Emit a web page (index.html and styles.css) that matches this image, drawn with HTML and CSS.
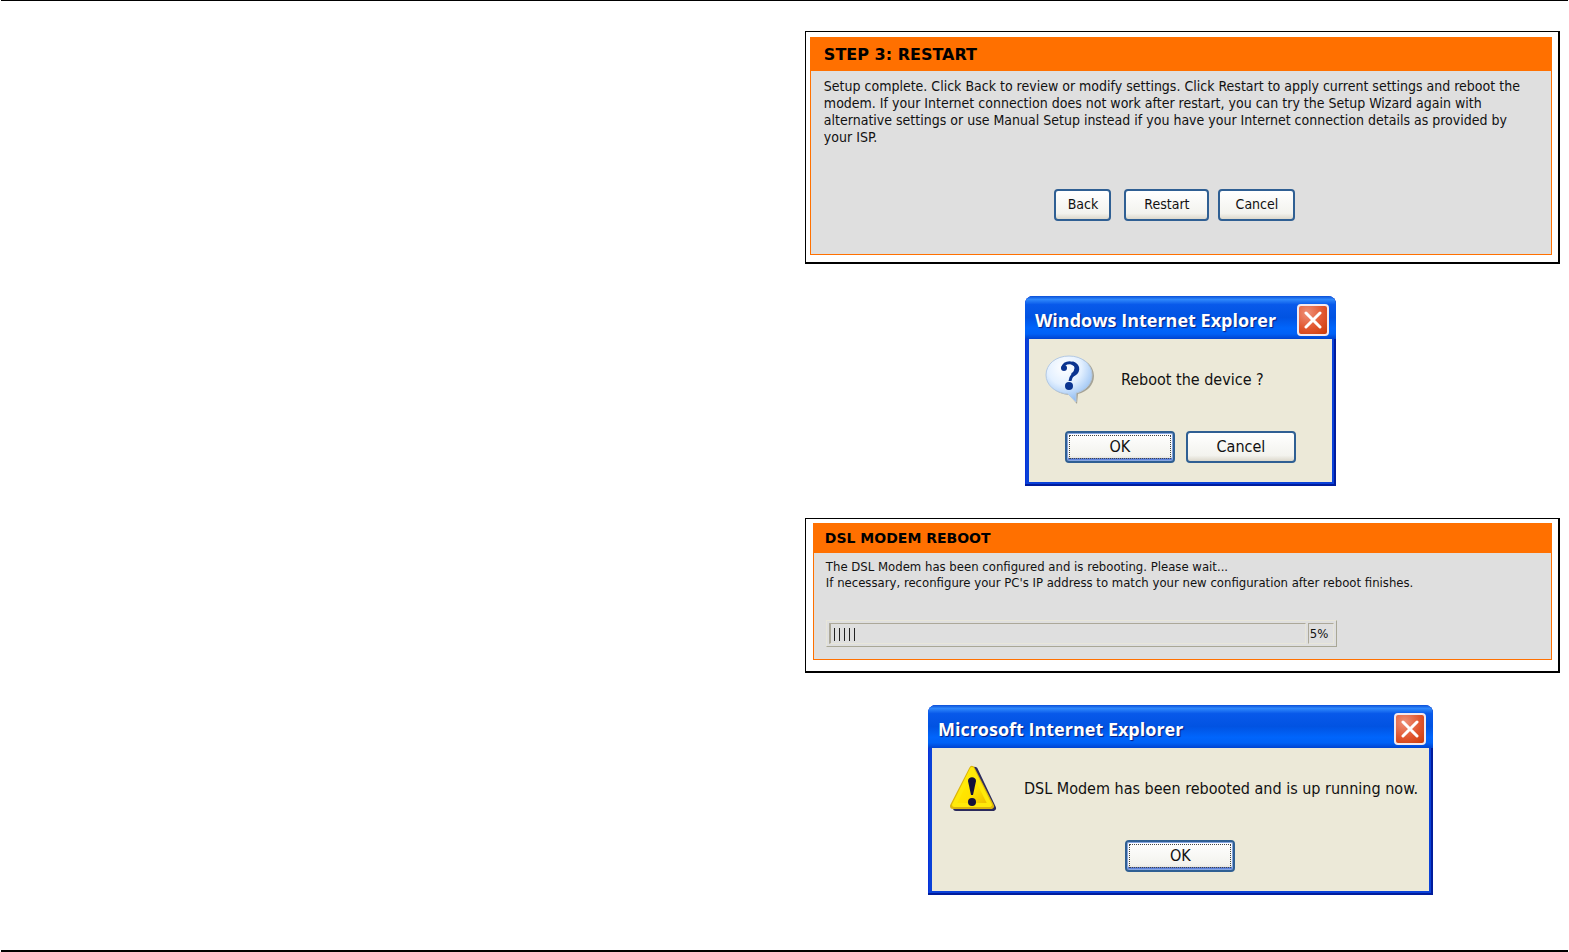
FILE: index.html
```html
<!DOCTYPE html>
<html lang="en">
<head>
    <meta charset="UTF-8">
    <meta name="viewport" content="width=device-width, initial-scale=1.0">
    <title>Setup Wizard</title>
    <link rel="stylesheet" href="styles.css">
</head>
<body>
    <main class="steps">
        <section class="frame">
            <div class="panel">
                <h2 class="panel-title">STEP 3: RESTART</h2>
                <div class="panel-body">
                    <p class="panel-text">
                        Setup complete. Click Back to review or modify settings. Click Restart to apply current settings and reboot the<br>
                        modem. If your Internet connection does not work after restart, you can try the Setup Wizard again with<br>
                        alternative settings or use Manual Setup instead if you have your Internet connection details as provided by<br>
                        your ISP.
                    </p>
                    <div class="panel-actions">
                        <button class="btn btn-back" type="button">Back</button>
                        <button class="btn btn-restart" type="button">Restart</button>
                        <button class="btn btn-cancel" type="button">Cancel</button>
                    </div>
                </div>
            </div>
        </section>

        <section class="dialog confirm" role="dialog" aria-labelledby="confirm-title">
            <header class="titlebar">
                <h2 class="dialog-title" id="confirm-title">Windows Internet Explorer</h2>
                <button class="close" type="button" aria-label="Close">
                    <svg width="18" height="18" viewBox="0 0 18 18"><path d="M2 2L16 16M16 2L2 16" stroke="#fff" stroke-width="3" stroke-linecap="round"/></svg>
                </button>
            </header>
            <div class="dialog-body">
                <div class="message">
                    <svg class="icon" width="50" height="50" viewBox="0 0 50 50">
                        <defs>
                            <radialGradient id="bubble" cx="40%" cy="25%" r="75%">
                                <stop offset="0" stop-color="#fff"/>
                                <stop offset="0.5" stop-color="#e3f0ff"/>
                                <stop offset="1" stop-color="#8fbcf2"/>
                            </radialGradient>
                        </defs>
                        <path d="M26 2C39 2 49 10 49 21C49 30 42 37 33 39L32 49L24 40C11 39 3 31 3 21C3 10 13 2 26 2Z" fill="#77756b" opacity="0.6"/>
                        <path d="M24 1C37 1 47 9 47 20C47 29 40 36 31 38L31 47L23 39C10 38 1 30 1 20C1 9 11 1 24 1Z" fill="url(#bubble)" stroke="#b4c9e2"/>
                        <path d="M18 13C18 6 31 6 31 13C31 19 25 20 25 26" fill="none" stroke="#0b3490" stroke-width="3"/>
                        <circle cx="19" cy="13" r="3" fill="#0b3490"/>
                        <path d="M27 8C35 11 33 18 27 20" fill="none" stroke="#0b3490" stroke-width="4"/>
                        <circle cx="24" cy="31" r="4" fill="#0b3490"/>
                    </svg>
                    <p class="message-text">Reboot the device ?</p>
                </div>
                <div class="dialog-actions">
                    <button class="btn btn-default" type="button">OK</button>
                    <button class="btn btn-wide" type="button">Cancel</button>
                </div>
            </div>
        </section>

        <section class="frame">
            <div class="panel panel-small">
                <h2 class="panel-title">DSL MODEM REBOOT</h2>
                <div class="panel-body">
                    <p class="panel-text">
                        The DSL Modem has been configured and is rebooting. Please wait...<br>
                        If necessary, reconfigure your PC's IP address to match your new configuration after reboot finishes.
                    </p>
                    <div class="progress">
                        <div class="track" role="progressbar" aria-label="Reboot progress" aria-valuemin="0" aria-valuemax="100" aria-valuenow="5">
                            <div class="ticks" style="width: 5%"></div>
                        </div>
                        <div class="percent">5%</div>
                    </div>
                </div>
            </div>
        </section>

        <section class="dialog notice" role="dialog" aria-labelledby="notice-title">
            <header class="titlebar">
                <h2 class="dialog-title" id="notice-title">Microsoft Internet Explorer</h2>
                <button class="close" type="button" aria-label="Close">
                    <svg width="18" height="18" viewBox="0 0 18 18"><path d="M2 2L16 16M16 2L2 16" stroke="#fff" stroke-width="3" stroke-linecap="round"/></svg>
                </button>
            </header>
            <div class="dialog-body">
                <div class="message">
                    <svg class="icon" width="50" height="50" viewBox="0 0 50 50">
                        <defs>
                            <linearGradient id="warning" x1="0" y1="0" x2="1" y2="1">
                                <stop offset="0" stop-color="#fff600"/>
                                <stop offset="0.6" stop-color="#ffe100"/>
                                <stop offset="1" stop-color="#e9b500"/>
                            </linearGradient>
                        </defs>
                        <path d="M27 6L45 44H8Z" fill="#2b2a5c" stroke="#2b2a5c" stroke-width="6" stroke-linejoin="round"/>
                        <path d="M24 5L43 42H5Z" fill="url(#warning)" stroke="#dcb40c" stroke-width="6" stroke-linejoin="round"/>
                        <path d="M24 5L42 41H6Z" fill="url(#warning)" stroke="#ffe90a" stroke-width="4" stroke-linejoin="round"/>
                        <path d="M20 17C20 12 28 12 28 17L25 31H23Z" fill="#14103a"/>
                        <circle cx="24" cy="38" r="4" fill="#14103a"/>
                    </svg>
                    <p class="message-text">DSL Modem has been rebooted and is up running now.</p>
                </div>
                <div class="dialog-actions">
                    <button class="btn btn-default" type="button">OK</button>
                </div>
            </div>
        </section>
    </main>
</body>
</html>
```
FILE: styles.css
```css
* {
    box-sizing: border-box;
}
body {
    min-height: 100vh;
    margin: 0 1px;
    border-top: 1px solid #000;
    border-bottom: 2px solid #000;
    background-color: #fff;
    color: #111;
    font-family: "DejaVu Sans Condensed", "DejaVu Sans", Tahoma, sans-serif;
}
h2, p {
    margin: 0;
    font-weight: normal;
}
.steps {
    display: flex;
    flex-direction: column;
    align-items: center;
    gap: 32px;
    margin-left: 51.3%;
    padding: 30px 8px 24px 0;
}

/* Router pages */
.frame {
    align-self: stretch;
    padding: 5px 6px 7px 4px;
    border: 1px solid #000;
    border-right-width: 2px;
    border-bottom-width: 2px;
}
.panel {
    border: 1px solid #ff7000;
    background-color: #dfdfdf;
}
.panel-title {
    padding: 0 13px;
    background-color: #ff7000;
    color: #000;
    font: bold 16px/33px "DejaVu Sans", Verdana, sans-serif;
}
.panel-body {
    padding: 7px 13px 33px;
}
.panel-text {
    font-size: 14px;
    line-height: 17px;
    white-space: nowrap;
}
.panel-actions {
    display: flex;
    justify-content: center;
    gap: 9px;
    margin-top: 43px;
    padding-right: 12px;
}
.panel-small {
    margin: -1px 0 4px 3px;
}
.panel-small .panel-title {
    padding: 0 11px;
    font-size: 14px;
    line-height: 29px;
}
.panel-small .panel-body {
    padding: 6px 12px 12px;
}
.panel-small .panel-text {
    font-size: 13px;
    line-height: 16px;
}

/* Buttons */
.btn {
    height: 32px;
    padding: 0 0 2px;
    border: 2px solid #2f5f93;
    border-radius: 4px;
    background: linear-gradient(#fff, #f3f3ee 80%, #dcd8cc);
    color: #111;
    font: inherit;
    font-size: 14px;
}
.btn-back {
    width: 57px;
    margin-right: 4px;
}
.btn-restart {
    width: 85px;
}
.btn-cancel {
    width: 77px;
}
.btn-wide,
.btn-default {
    width: 110px;
    font-size: 16px;
}
.btn-default {
    box-shadow: inset 0 0 0 1px #86a5e0, inset 0 -3px 0 #5f83dc;
    outline: 1px dotted #444;
    outline-offset: -5px;
}

/* Progress bar */
.progress {
    display: flex;
    gap: 2px;
    width: 72%;
    min-width: 511px;
    max-width: 511px;
    margin-top: 29px;
    padding: 2px;
    border: 1px solid #e8e6da;
    border-right-color: #a9a796;
    border-bottom-color: #a9a796;
}
.track,
.percent {
    height: 21px;
    border: 1px solid #aca899;
    border-right-color: #e8e6da;
    border-bottom-color: #e8e6da;
}
.track {
    flex: 1;
    padding: 4px 3px;
    border-left-width: 2px;
}
.ticks {
    height: 13px;
    background: repeating-linear-gradient(90deg, #222 0, #222 1px, transparent 1px, transparent 5px);
}
.percent {
    width: 26px;
    padding-left: 1px;
    font-size: 13px;
    line-height: 20px;
}

/* Message boxes */
.dialog {
    display: flex;
    flex-direction: column;
    height: 190px;
    margin-right: 4px;
    padding: 0 4px 4px;
    border-radius: 8px 8px 0 0;
    background-color: #0a41d8;
    box-shadow: inset -2px -2px 0 #001c9c, inset 1px 0 0 #0831d9;
}
.confirm {
    width: 311px;
}
.notice {
    width: 505px;
}
.titlebar {
    display: flex;
    align-items: center;
    justify-content: space-between;
    height: 43px;
    margin: 0 -4px;
    padding: 4px 7px 0 10px;
    border-radius: 8px 8px 0 0;
    background: linear-gradient(#0a4fd8, #2f88fb 8%, #0859ea 20%, #0153e2 50%, #0065fc 75%, #0061f6 88%, #0043cf);
}
.dialog-title {
    color: #fff;
    font: bold 18px/24px "Open Sans", sans-serif;
    text-shadow: 1px 1px 1px #0b1c80;
    white-space: nowrap;
}
.close {
    display: flex;
    align-items: center;
    justify-content: center;
    width: 32px;
    height: 32px;
    padding: 0;
    border: 2px solid #f4e9ee;
    border-radius: 4px;
    background: radial-gradient(circle at 30% 25%, #ee9078, #e1562f 55%, #c93a08);
}
.dialog-body {
    flex: 1;
    padding: 16px 16px 0;
    background-color: #ece9d8;
}
.message {
    display: flex;
    align-items: center;
    gap: 26px;
}
.icon {
    flex-shrink: 0;
}
.message-text {
    font-size: 16px;
    line-height: 20px;
    white-space: nowrap;
}
.dialog-actions {
    display: flex;
    justify-content: center;
    gap: 11px;
    margin-top: 26px;
}
```
